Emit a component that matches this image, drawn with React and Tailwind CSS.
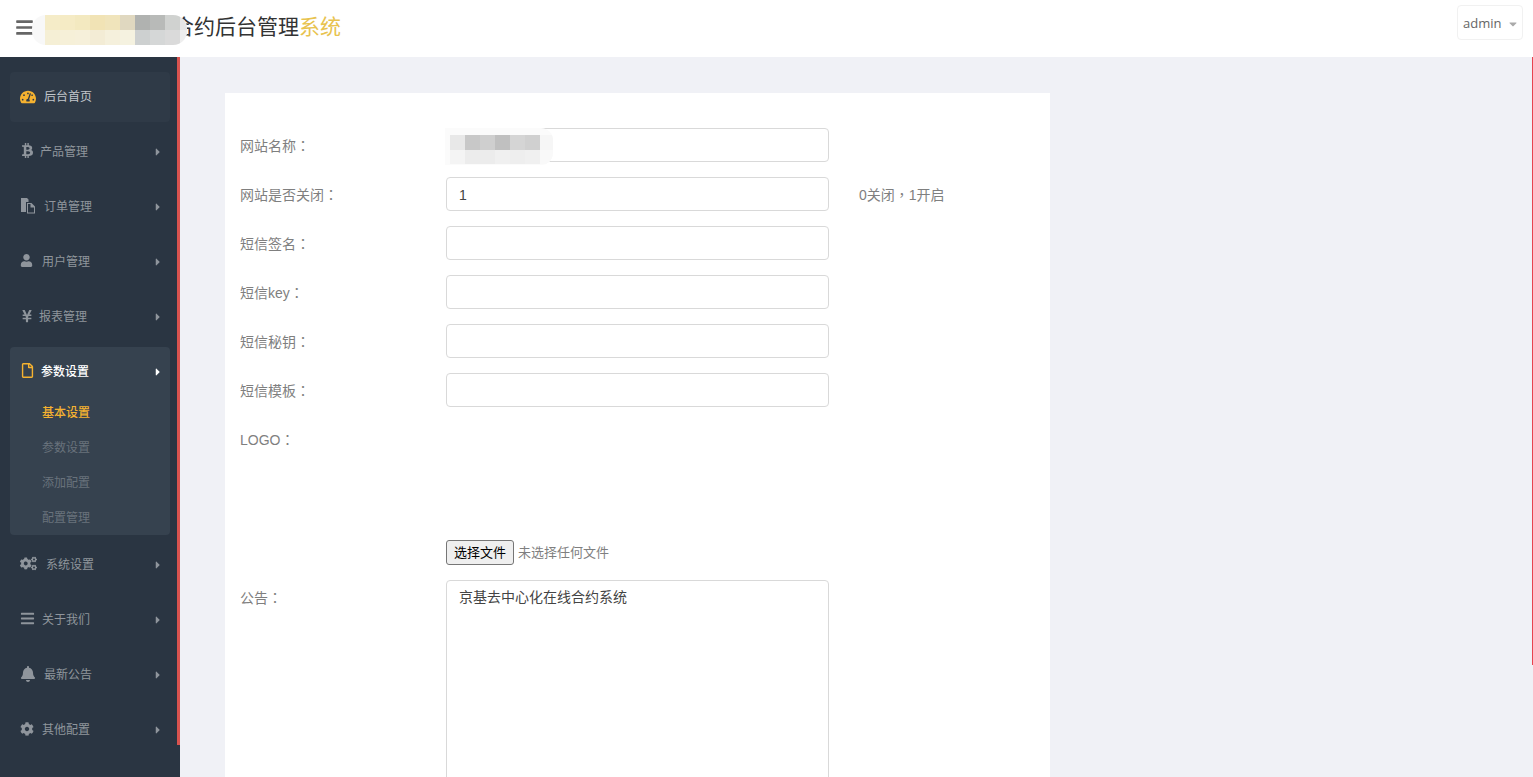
import {
  FaBars,
  FaBell,
  FaBtc,
  FaCaretDown,
  FaCaretRight,
  FaCog,
  FaCogs,
  FaRegFile,
  FaTachometerAlt,
  FaUser,
  FaYenSign
} from "react-icons/fa";

const cjk = "font-['Liberation_Sans','Noto_Sans_CJK_SC',sans-serif]";

const logoTop = ["bg-[#f5ecc8]", "bg-[#f5ebc5]", "bg-[#f3e9c0]", "bg-[#f1e3b5]", "bg-[#f0e4bb]", "bg-[#e0d8c0]", "bg-[#b0b2b0]", "bg-[#b8bab8]", "bg-[#d0d2d0]", "bg-[#e6e6e6]"];
const logoBottom = ["bg-[#f5efd5]", "bg-[#f6f0d8]", "bg-[#f6f0da]", "bg-[#f3ecd5]", "bg-[#f5f0dc]", "bg-[#f5f2e0]", "bg-[#cdd0d0]", "bg-[#d5d7d7]", "bg-[#dadada]", "bg-[#eeeeee]"];
const nameTop = ["bg-[#e8e8e8]", "bg-[#c8c8c8]", "bg-[#cfcfcf]", "bg-[#c0c0c0]", "bg-[#d5d5d5]", "bg-[#d0d0d0]", "bg-[#f6f6f6]"];
const nameBottom = ["bg-[#f4f4f4]", "bg-[#ececec]", "bg-[#ececec]", "bg-[#f0f0f0]", "bg-[#eeeeee]", "bg-[#f0f0f0]", "bg-[#f9f9f9]"];

const MosaicRow = ({ blocks, h }) => (
  <div className={`flex ${h}`}>
    {blocks.map((c, i) => (
      <div key={i} className={`w-[15px] shrink-0 ${c}`} />
    ))}
  </div>
);

// font awesome 4 "files-o": solid back sheet, outlined front sheet
const FilesIcon = () => (
  <svg width="16" height="16" viewBox="0 0 16 16" fill="currentColor">
    <path d="M1 0h6l1.5 1.5V4H6v10H1z" />
    <path d="M7 5h4.5L15 8.5V15.5H7zM8 6v8.5h6V9.5h-3.5V6z" />
  </svg>
);

const menu = [
  { label: "产品管理", Icon: FaBtc, w: "w-[20px]", size: 15 },
  { label: "订单管理", Icon: FilesIcon, w: "w-[24px]" },
  { label: "用户管理", Icon: FaUser, w: "w-[22px]", size: 13 },
  { label: "报表管理", Icon: FaYenSign, w: "w-[19px]", size: 14 }
];

const menuBottom = [
  { label: "系统设置", Icon: FaCogs, w: "w-[26px]", size: 17 },
  { label: "关于我们", Icon: FaBars, w: "w-[22px]", size: 15 },
  { label: "最新公告", Icon: FaBell, w: "w-[24px]", size: 16 },
  { label: "其他配置", Icon: FaCog, w: "w-[22px]", size: 14 }
];

const MenuItem = ({ label, Icon, w, size }) => (
  <div className="flex h-[50px] items-center ml-[10px] mr-[7px] mb-[5px] pl-[10px] pr-[6px] text-[#8f959c]">
    <div className={`${w} shrink-0 -mt-[3px]`}>
      <Icon size={size} />
    </div>
    <span className="text-[12px] flex-1">{label}</span>
    <FaCaretRight size={12} />
  </div>
);

const Colon = () => <span className="font-['Noto_Sans_CJK_TC',sans-serif]">：</span>;

const Field = ({ label, value, hint }) => (
  <div className="flex h-[34px] mb-[15px]">
    <label className="w-[206px] shrink-0 pt-[7px] text-[14px] leading-[20px] text-[#7f7f7f]">
      {label}
      <Colon />
    </label>
    <input
      readOnly
      value={value || ""}
      className={`w-[383px] h-[34px] px-[12px] pt-[2px] bg-white border border-[#d9d9d9] rounded-[4px] text-[14px] text-[#444] outline-none ${cjk}`}
    />
    {hint && (
      <span className="ml-[30px] pt-[7px] text-[14px] leading-[20px] text-[#7f7f7f]">
        0关闭<span className="font-['Noto_Sans_CJK_TC',sans-serif]">，</span>1开启
      </span>
    )}
  </div>
);

export default function App() {
  return (
    <div className={`h-screen overflow-hidden flex flex-col bg-[#f0f1f6] ${cjk}`}>
      <header className="h-[57px] shrink-0 bg-white flex items-center justify-between pl-[15px] pr-[10px]">
        <div className="relative flex items-center">
          <FaBars size={19} className="text-[#666] -mt-[2px]" />
          <span className="ml-[139px] -mt-[4px] text-[21px] leading-none text-[#333]">
            合约后台管理<span className="text-[#e8c34f]">系统</span>
          </span>
          {/* blurred out logo */}
          <div className="absolute left-[17px] top-[-5px] w-[155px] h-[30px] flex flex-col pl-[13px] overflow-hidden rounded-[14px] bg-[#f8f8f8]">
            <MosaicRow blocks={logoTop} h="h-[15px]" />
            <MosaicRow blocks={logoBottom} h="h-[15px]" />
          </div>
        </div>
        <div className="self-start mt-[5px] h-[35px] w-[66px] flex items-center gap-[6px] pl-[5px] pt-[2px] border border-[#f1f1f1] rounded-[4px] text-[13px] text-[#666]">
          <span className="font-['Open_Sans',sans-serif]">admin</span>
          <FaCaretDown size={12} className="text-[#aaa]" />
        </div>
      </header>

      <div className="flex flex-1 min-h-0">
        <aside className="w-[180px] shrink-0 flex bg-[#2a3542]">
          <nav className="w-[177px] shrink-0 pt-[15px]">
            <div className="flex h-[50px] items-center ml-[10px] mr-[7px] mb-[5px] pl-[10px] rounded-[4px] bg-[#2f3a47] text-[#c3c7cb]">
              <div className="w-[24px] shrink-0 -mt-[1px] text-[#f5b230]">
                <FaTachometerAlt size={16} />
              </div>
              <span className="text-[12px]">后台首页</span>
            </div>

            {menu.map((m) => (
              <MenuItem key={m.label} {...m} />
            ))}

            <div className="ml-[10px] mr-[7px] mb-[5px] h-[188px] rounded-[4px] bg-[#36424f]">
              <div className="flex h-[50px] items-center pl-[10px] pr-[6px] text-white">
                <div className="w-[21px] shrink-0 -mt-[3px] text-[#f5b230]">
                  <FaRegFile size={15} />
                </div>
                <span className="text-[12px] font-medium flex-1">参数设置</span>
                <FaCaretRight size={12} />
              </div>
              <div className="pl-[32px] -mt-[1px] text-[12px]">
                <div className="h-[35px] leading-[35px] font-medium text-[#f5b230]">基本设置</div>
                <div className="h-[35px] leading-[35px] text-[#69727c]">参数设置</div>
                <div className="h-[35px] leading-[35px] text-[#69727c]">添加配置</div>
                <div className="h-[35px] leading-[35px] text-[#69727c]">配置管理</div>
              </div>
            </div>

            {menuBottom.map((m) => (
              <MenuItem key={m.label} {...m} />
            ))}
          </nav>
          <div className="w-[3px] h-[688px] bg-[#d9534f]" />
        </aside>

        <main className="flex-1 flex min-w-0">
          <div className="flex-1 min-w-0 pt-[36px] pl-[45px]">
            <div className="w-[825px] bg-white pt-[35px] pl-[15px]">
              <div className="relative">
                <Field label="网站名称" />
                {/* blurred out site name */}
                <div className="absolute left-[205px] top-0 w-[108px] h-[37px] pt-[7px] pl-[5px] overflow-hidden rounded-r-[12px] bg-[#fbfbfb]">
                  <MosaicRow blocks={nameTop} h="h-[15px]" />
                  <MosaicRow blocks={nameBottom} h="h-[14px]" />
                </div>
              </div>
              <Field label="网站是否关闭" value="1" hint />
              <Field label="短信签名" />
              <Field label="短信key" />
              <Field label="短信秘钥" />
              <Field label="短信模板" />

              <div className="flex h-[143px]">
                <label className="w-[206px] shrink-0 pt-[7px] text-[14px] leading-[20px] text-[#7f7f7f]">
                  LOGO
                  <Colon />
                </label>
                <div className="flex items-end">
                  <button className="h-[25px] w-[68px] bg-[#efefef] border border-[#767676] rounded-[3px] text-[13px] text-black">
                    选择文件
                  </button>
                  <span className="ml-[4px] text-[13px] leading-[25px] text-[#7f7f7f]">未选择任何文件</span>
                </div>
              </div>

              <div className="flex mt-[15px]">
                <label className="w-[206px] shrink-0 pt-[7px] text-[14px] leading-[20px] text-[#7f7f7f]">
                  公告
                  <Colon />
                </label>
                <textarea
                  readOnly
                  value="京基去中心化在线合约系统"
                  className={`w-[383px] h-[300px] px-[12px] py-[6px] bg-white border border-[#d9d9d9] rounded-[4px] text-[14px] leading-[20px] text-[#444] outline-none resize-none ${cjk}`}
                />
              </div>
            </div>
          </div>
          <div className="w-px h-[608px] bg-[#e8434f]" />
        </main>
      </div>
    </div>
  );
}
